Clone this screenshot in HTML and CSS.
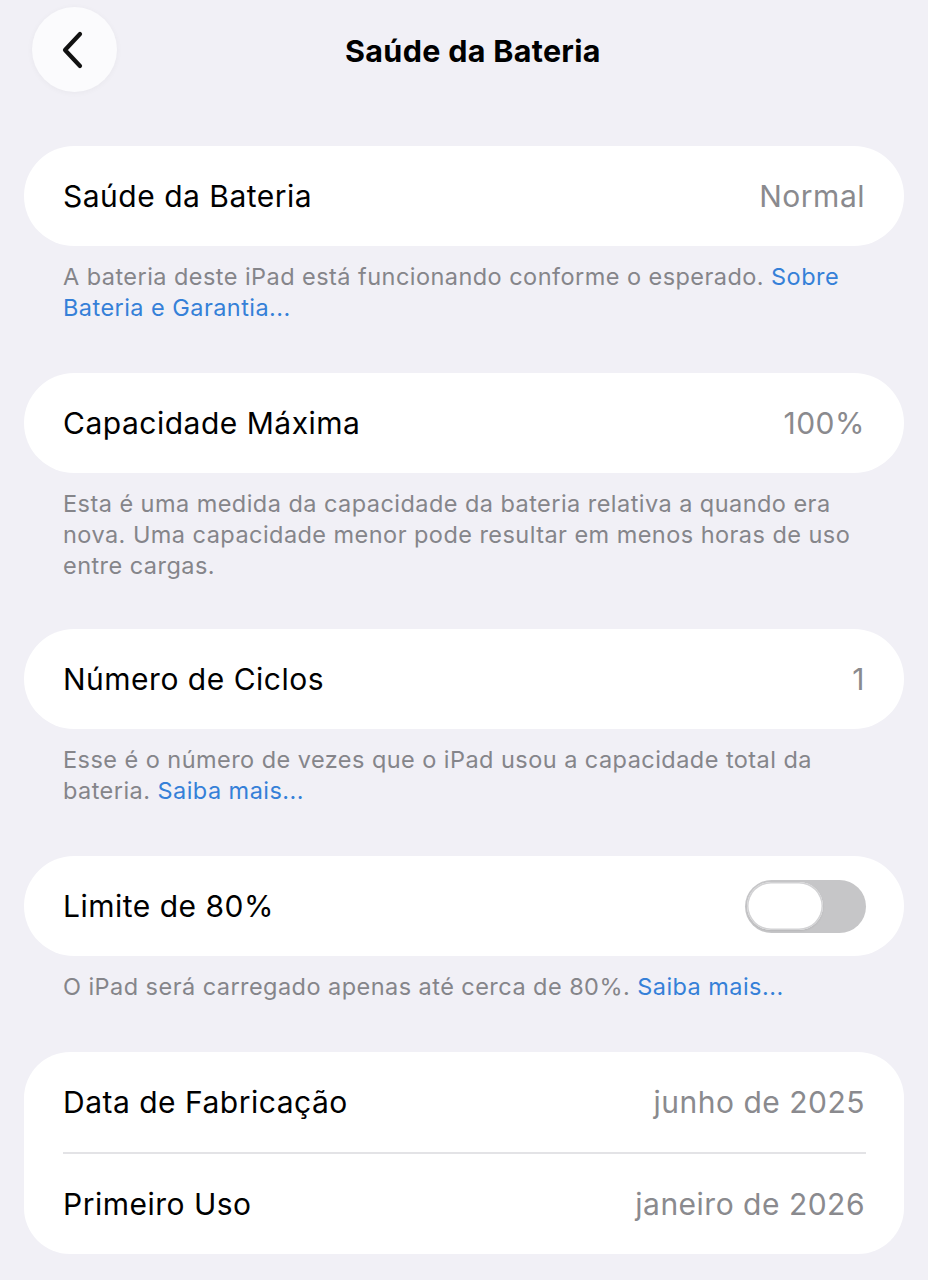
FILE: index.html
```html
<!DOCTYPE html>
<html lang="pt-BR">
<head>
<meta charset="utf-8">
<title>Saúde da Bateria</title>
<link rel="stylesheet" href="styles.css">
</head>
<body>
<div class="page">
  <header class="nav">
    <button class="back" aria-label="Voltar">
      <svg width="24" height="40" viewBox="0 0 24 40"><path d="M19 4 L4 20 L19 36" fill="none" stroke="#111" stroke-width="4.2" stroke-linecap="round" stroke-linejoin="round"/></svg>
    </button>
    <h1 class="title">Saúde da Bateria</h1>
  </header>

  <main class="list">
    <section class="group">
      <div class="card">
        <div class="row"><span class="label">Saúde da Bateria</span><span class="value">Normal</span></div>
      </div>
      <p class="footer">A bateria deste iPad está funcionando conforme o esperado. <a class="link">Sobre Bateria e Garantia...</a></p>
    </section>

    <section class="group group-tight">
      <div class="card">
        <div class="row"><span class="label">Capacidade Máxima</span><span class="value">100%</span></div>
      </div>
      <p class="footer">Esta é uma medida da capacidade da bateria relativa a quando era nova. Uma capacidade menor pode resultar em menos horas de uso entre cargas.</p>
    </section>

    <section class="group">
      <div class="card">
        <div class="row"><span class="label">Número de Ciclos</span><span class="value">1</span></div>
      </div>
      <p class="footer">Esse é o número de vezes que o iPad usou a capacidade total da bateria. <a class="link">Saiba mais...</a></p>
    </section>

    <section class="group">
      <div class="card">
        <div class="row"><span class="label">Limite de 80%</span><span class="toggle"><span class="knob"></span></span></div>
      </div>
      <p class="footer">O iPad será carregado apenas até cerca de 80%. <a class="link">Saiba mais...</a></p>
    </section>

    <section class="group">
      <div class="card card-multi">
        <div class="row"><span class="label">Data de Fabricação</span><span class="value">junho de 2025</span></div>
        <div class="divider"></div>
        <div class="row"><span class="label">Primeiro Uso</span><span class="value">janeiro de 2026</span></div>
      </div>
    </section>
  </main>
</div>
</body>
</html>
```

FILE: styles.css
```css
* { box-sizing: border-box; }
html, body {
  margin: 0;
  padding: 0;
  background: #f1f0f6;
}
body {
  font-family: Inter, "Noto Sans", "Liberation Sans", sans-serif;
  color: #000;
  -webkit-font-smoothing: antialiased;
}
.page {
  width: 928px;
  min-height: 1280px;
  background: #f1f0f6;
}
.nav {
  height: 100px;
  display: flex;
  align-items: center;
  justify-content: center;
  position: relative;
}
.back {
  position: absolute;
  left: 32px;
  top: 7px;
  width: 85px;
  height: 85px;
  border-radius: 50%;
  border: none;
  background: #fbfbfd;
  box-shadow: 0 1px 6px rgba(0,0,0,0.04);
  display: flex;
  align-items: center;
  justify-content: center;
  padding: 0 4px 0 0;
}
.title {
  margin: 0;
  font-size: 30.5px;
  font-weight: 700;
  letter-spacing: 0.3px;
  margin-left: 18px;
}
.list {
  padding: 46px 24px 0;
}
.group {
  margin-bottom: 50px;
}
.group-tight {
  margin-bottom: 48px;
}
.card {
  background: #fff;
  border-radius: 50px;
  padding: 0 39px 0 39px;
}
.card-multi {
  border-radius: 46px;
}
.row {
  height: 100px;
  display: flex;
  align-items: center;
  justify-content: space-between;
}
.label {
  font-size: 30px;
  letter-spacing: 0.5px;
}
.value {
  font-size: 30px;
  color: #8a8a8e;
  letter-spacing: 0.5px;
}
.divider {
  height: 2px;
  background: #e3e3e6;
  margin-right: -1px;
}
.footer {
  margin: 0;
  padding: 15px 39px 0;
  font-size: 23.5px;
  line-height: 31px;
  color: #85858a;
  letter-spacing: 0.45px;
}
.link {
  color: #3580d8;
}
.toggle {
  width: 121px;
  height: 53px;
  border-radius: 27px;
  background: #c6c6c8;
  display: flex;
  align-items: center;
  padding: 0 2px;
  margin-right: -1px;
}
.knob {
  width: 76px;
  height: 48px;
  border-radius: 24px;
  background: #fff;
  box-shadow: 0 0 0 1.5px #d2d2d4 inset, 0 1px 2px rgba(0,0,0,0.08);
}
```
